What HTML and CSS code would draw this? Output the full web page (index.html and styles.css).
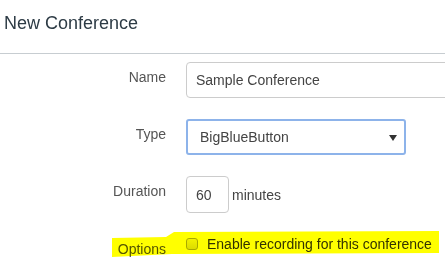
FILE: index.html
```html
<!DOCTYPE html>
<html lang="en">

<head>
    <meta charset="UTF-8">
    <meta name="viewport" content="width=device-width, initial-scale=1.0">
    <title>New Conference</title>
    <link rel="stylesheet" href="styles.css">
</head>

<body>

    <div class="dialog">
        <div class="dialog-header">
            <h2>New Conference</h2>
        </div>

        <!-- Conference Form -->
        <div class="conference-form">
            <div class="row">
                <label for="name">Name</label>
                <input type="text" id="name" class="text-input name-input" value="Sample Conference">
            </div>

            <div class="row">
                <label>Type</label>
                <div class="select-box">
                    <span>BigBlueButton</span>
                    <svg class="caret" width="8" height="6" viewBox="0 0 8 6"><path d="M0 0H8L4 6Z" fill="#333"/></svg>
                </div>
            </div>

            <div class="row row-duration">
                <label for="duration">Duration</label>
                <input type="text" id="duration" class="text-input duration-input" value="60">
                <span class="unit">minutes</span>
            </div>

            <div class="row row-options">
                <label class="options-label">Options</label>
                <div class="checkbox-line">
                    <span class="checkbox"></span>
                    <span>Enable recording for this conference</span>
                </div>
                <span class="highlight"></span>
            </div>
        </div>
    </div>

</body>

</html>
```

FILE: styles.css
```css
html,
body {
    margin: 0;
    padding: 0;
    background-color: #fff;
    overflow: hidden;
}

body {
    font-family: 'Liberation Sans', Arial, sans-serif;
    font-size: 14px;
    color: #555;
}

.dialog {
    width: 445px;
    height: 264px;
    overflow: hidden;
}

.dialog-header {
    padding: 11px 0 18px 4px;
    border-bottom: 1px solid #c7cdd1;
}

.dialog-header h2 {
    margin: 0;
    font-size: 18px;
    font-weight: normal;
    line-height: 24px;
    color: #2d3b45;
}

.conference-form {
    padding-top: 8px;
}

.row {
    display: flex;
    align-items: flex-start;
    gap: 20px;
    margin-bottom: 21px;
}

.row label {
    flex: 0 0 166px;
    text-align: right;
    line-height: 20px;
    padding-top: 5px;
    color: #555;
}

.text-input {
    box-sizing: border-box;
    height: 36px;
    padding: 0 9px;
    border: 1px solid #ccc;
    border-radius: 4px;
    font-family: inherit;
    font-size: 14px;
    color: #444;
    background: #fff;
    outline: none;
}

.name-input {
    flex: 0 0 280px;
}

.select-box {
    box-sizing: border-box;
    width: 220px;
    height: 36px;
    display: flex;
    align-items: center;
    justify-content: space-between;
    padding: 0 7px 0 12px;
    border: 2px solid #8db3ea;
    border-radius: 3px;
    color: #444;
}

.caret {
    margin-top: 1px;
}

.row-duration {
    margin-top: 1px;
    gap: 20px;
}

.duration-input {
    width: 43px;
    height: 37px;
}

.unit {
    line-height: 20px;
    padding-top: 9px;
    margin-left: -17px;
    color: #444;
}

/* Options row with the marker highlight */
.row-options {
    position: relative;
    margin-top: -3px;
    height: 26px;
}

.options-label {
    padding-top: 8px !important;
}

.checkbox-line {
    display: flex;
    align-items: center;
    gap: 9px;
    padding-top: 3px;
    line-height: 20px;
    color: #333;
}

.checkbox {
    box-sizing: border-box;
    width: 12px;
    height: 12px;
    border: 1px solid #a9a9a9;
    border-radius: 3px;
    background: linear-gradient(#f2f2f2, #dcdcdc);
}

.highlight {
    position: absolute;
    left: 112px;
    top: 0;
    width: 327px;
    height: 26px;
    background: #ffff00;
    mix-blend-mode: multiply;
    clip-path: polygon(0 7px, 54px 6px, 62px 1px, 327px 0, 327px 22px, 60px 23px, 0 26px);
}
```
